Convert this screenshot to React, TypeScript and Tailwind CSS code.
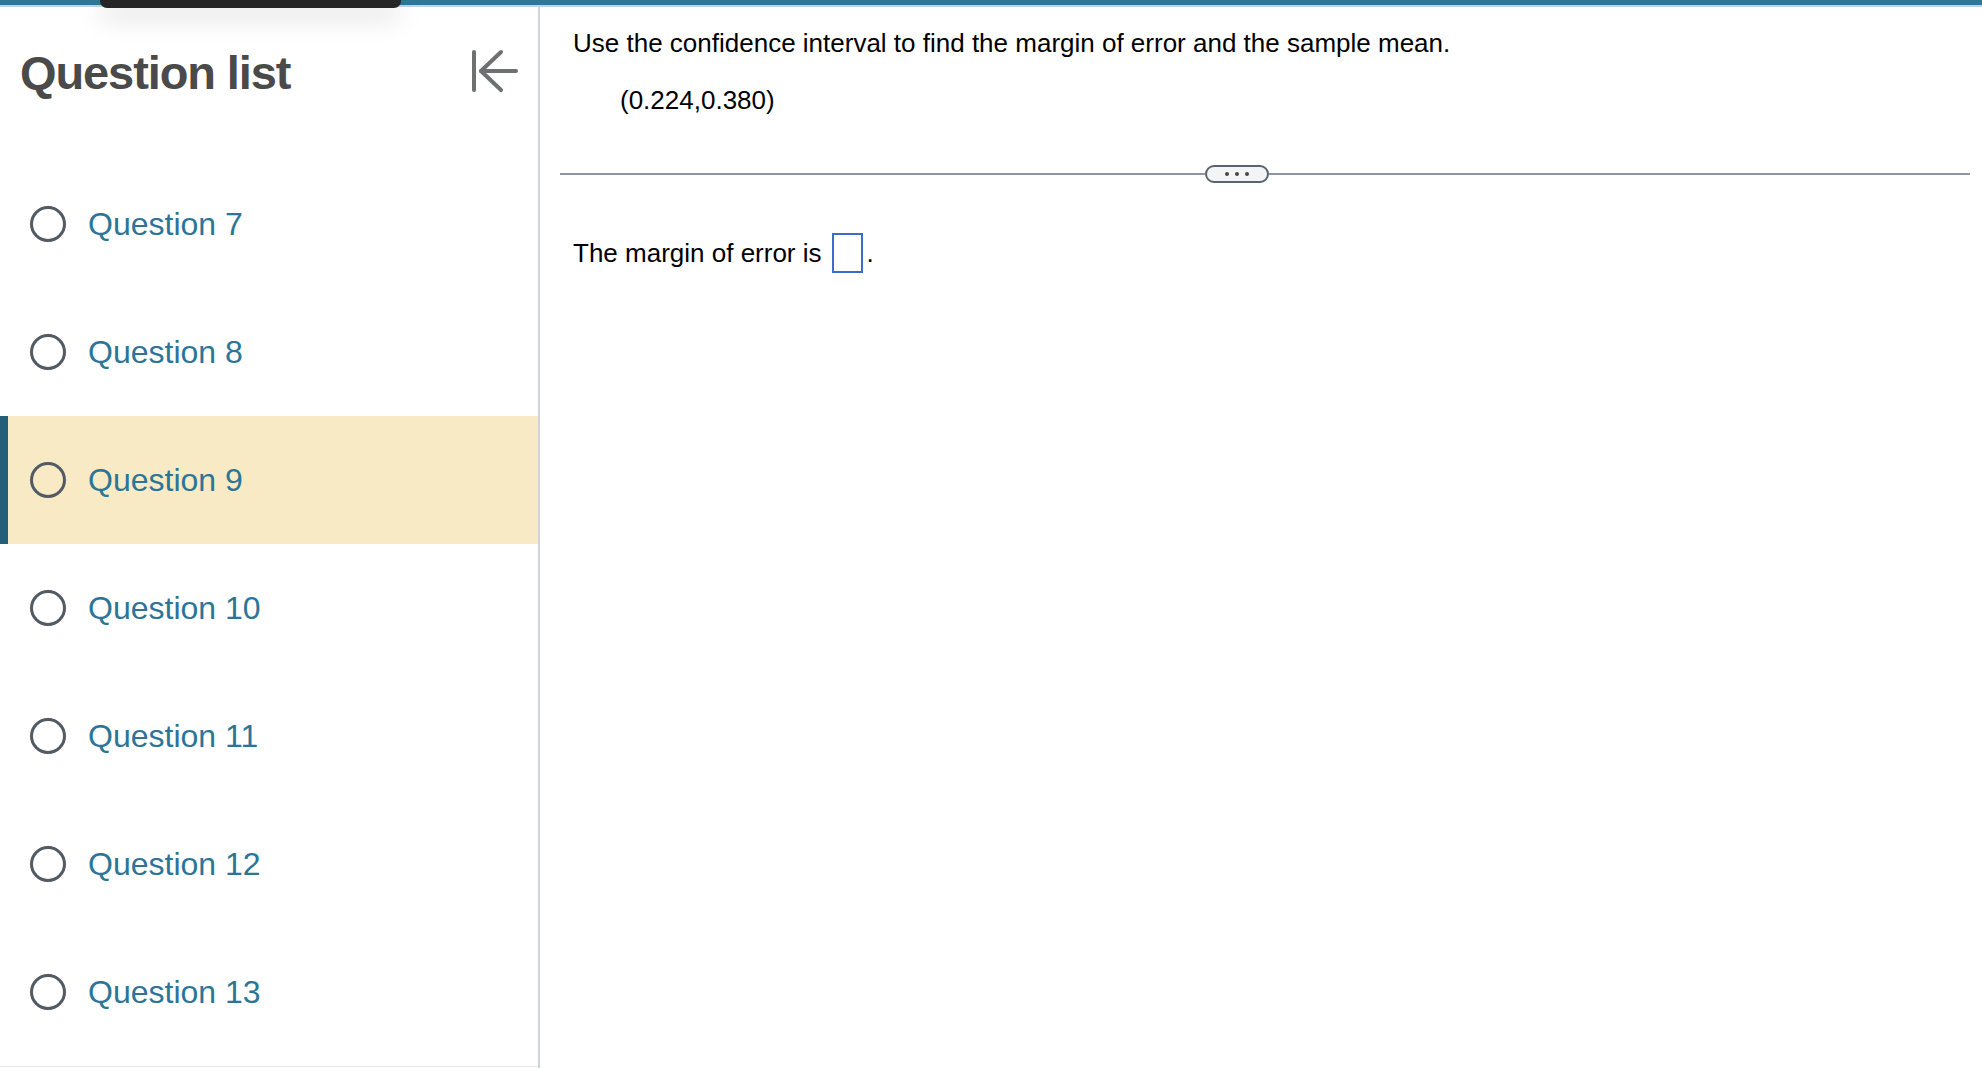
import React from "react";

const questions = [7, 8, 9, 10, 11, 12, 13];
const current = 9;

function CollapseIcon() {
  return (
    <svg width="48" height="44" viewBox="0 0 48 44" fill="none" stroke="#6d7171" strokeWidth="4" strokeLinecap="round" strokeLinejoin="round">
      <path d="M4 3v38" />
      <path d="M31 3 11 22l20 19" />
      <path d="M11 22h35" />
    </svg>
  );
}

function QuestionRow(props: { n: number; active: boolean }) {
  return (
    <div
      className={
        props.active
          ? "flex h-[128px] items-center border-l-[8px] border-[#245e78] bg-[#f7eac4] pl-[22px]"
          : "flex h-[128px] items-center pl-[30px]"
      }
    >
      <div className="h-[36px] w-[36px] rounded-full border-[3px] border-[#525a63]" />
      <span className="ml-[22px] text-[32px] leading-[40px] text-[#2c7597]">Question {props.n}</span>
    </div>
  );
}

export default function App() {
  return (
    <div className="relative flex h-[1068px] w-[1982px] flex-col overflow-hidden bg-white font-['Liberation_Sans',Arial,sans-serif]">
      <div className="h-[5px] bg-[#2f7798]" />
      <div className="h-[2px] bg-[#c6d3df]" />

      {/* dark tab hanging from the top bar */}
      <div className="absolute left-[100px] top-0 h-[8px] w-[301px] rounded-b-[7px] bg-[#262626] shadow-[0_8px_26px_rgba(0,0,0,0.22)]" />

      <div className="flex flex-1">
        <aside className="flex w-[540px] flex-col border-r-2 border-[#d0d4dd]">
          <div className="flex h-[153px] items-start justify-between pl-[20px] pr-[20px]">
            <h1 className="mt-[38px] text-[47px] font-bold leading-[56px] tracking-[-1.1px] text-[#4a4a4a]">Question list</h1>
            <div className="mt-[42px]">
              <CollapseIcon />
            </div>
          </div>
          {questions.map((n) => (
            <QuestionRow key={n} n={n} active={n === current} />
          ))}
          <div className="mb-[1px] mt-auto border-b border-[#e4e6ea]" />
        </aside>

        <main className="flex flex-1 flex-col text-[26px] leading-[30px] text-black">
          <p className="ml-[33px] mt-[21px]">Use the confidence interval to find the margin of error and the sample mean.</p>
          <p className="ml-[80px] mt-[27px]">(0.224,0.380)</p>

          <div className="ml-[20px] mr-[12px] mt-[50px] flex h-[18px] items-center">
            <div className="h-[2px] w-[645px] bg-[#9095a5]" />
            <div className="flex h-[18px] w-[64px] items-center justify-center gap-[6px] rounded-full border-2 border-[#5a6470] bg-[#f2f4f6]">
              <span className="h-[4px] w-[4px] rounded-full bg-[#474747]" />
              <span className="h-[4px] w-[4px] rounded-full bg-[#474747]" />
              <span className="h-[4px] w-[4px] rounded-full bg-[#474747]" />
            </div>
            <div className="h-[2px] flex-1 bg-[#9095a5]" />
          </div>

          <div className="ml-[33px] mt-[50px] flex items-center">
            <span>The margin of error is</span>
            <span className="ml-[10px] h-[40px] w-[31px] border-2 border-[#3e6ccc]" />
            <span className="ml-[4px]">.</span>
          </div>
        </main>
      </div>
    </div>
  );
}
